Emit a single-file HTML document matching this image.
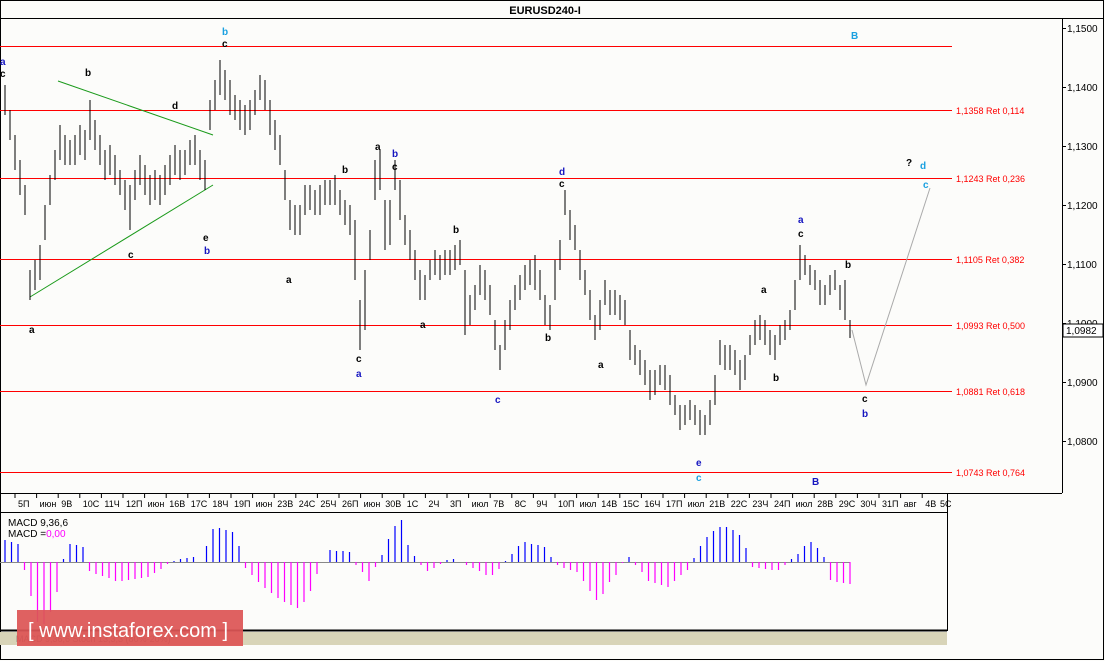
<!DOCTYPE html>
<html><head><meta charset="utf-8"><style>
body{margin:0;background:#fcfcfa;}
svg{display:block;font-family:"Liberation Sans",sans-serif;}
</style></head><body>
<svg width="1105" height="661" viewBox="0 0 1105 661" xmlns="http://www.w3.org/2000/svg">
<rect x="0.5" y="0.5" width="1103" height="659" fill="#fcfcfa" stroke="#000"/>
<text x="545" y="14" font-size="11" font-weight="bold" text-anchor="middle">EURUSD240-I</text>
<line x1="0" y1="18.5" x2="1104" y2="18.5" stroke="#000"/>
<line x1="1062.5" y1="18" x2="1062.5" y2="493" stroke="#000"/>
<line x1="0" y1="493.5" x2="1062" y2="493.5" stroke="#000"/>
<g stroke="#f00" stroke-width="1">
<line x1="0" y1="46.5" x2="952" y2="46.5"/>
<line x1="0" y1="110.5" x2="952" y2="110.5"/>
<line x1="0" y1="178.5" x2="952" y2="178.5"/>
<line x1="0" y1="259.5" x2="952" y2="259.5"/>
<line x1="0" y1="325.5" x2="952" y2="325.5"/>
<line x1="0" y1="391.5" x2="952" y2="391.5"/>
<line x1="0" y1="472.5" x2="952" y2="472.5"/>
</g>
<g fill="#f00" font-size="9">
<text x="956" y="114">1,1358 Ret 0,114</text>
<text x="956" y="182">1,1243 Ret 0,236</text>
<text x="956" y="263">1,1105 Ret 0,382</text>
<text x="956" y="329">1,0993 Ret 0,500</text>
<text x="956" y="395">1,0881 Ret 0,618</text>
<text x="956" y="476">1,0743 Ret 0,764</text>
</g>
<g font-size="10" fill="#000">
<g stroke="#000"><line x1="1062" y1="28.5" x2="1066" y2="28.5"/><line x1="1062" y1="87.5" x2="1066" y2="87.5"/><line x1="1062" y1="146.5" x2="1066" y2="146.5"/><line x1="1062" y1="205.5" x2="1066" y2="205.5"/><line x1="1062" y1="264.5" x2="1066" y2="264.5"/><line x1="1062" y1="323.5" x2="1066" y2="323.5"/><line x1="1062" y1="382.5" x2="1066" y2="382.5"/><line x1="1062" y1="441.5" x2="1066" y2="441.5"/></g>
<text x="1067" y="32">1,1500</text><text x="1067" y="91">1,1400</text><text x="1067" y="150">1,1300</text><text x="1067" y="209">1,1200</text><text x="1067" y="268">1,1100</text><text x="1067" y="327">1,1000</text><text x="1067" y="386">1,0900</text><text x="1067" y="445">1,0800</text>
</g>
<rect x="1063" y="324" width="40" height="13" fill="#fff" stroke="#000"/>
<text x="1066" y="334" font-size="10">1,0982</text>
<g stroke="#1a9a1a"><line x1="58" y1="81" x2="213" y2="135"/><line x1="30" y1="297" x2="213" y2="185"/></g>
<polyline points="852,330 866,385 930,188" fill="none" stroke="#aaa"/>
<path stroke="#000" fill="none" d="M5 85V115M10 110V140M15 135V170M20 160V195M25 185V215M30 270V300M35 260V290M40 245V280M45 205V240M50 175V205M55 150V180M60 125V160M65 135V165M70 140V165M75 135V165M80 125V155M85 130V160M90 100V140M95 120V150M100 135V165M105 150V180M110 145V175M115 155V185M120 170V195M125 180V210M130 185V230M135 170V200M140 155V185M145 165V195M150 175V205M155 170V200M160 175V205M165 165V195M170 155V185M175 145V175M180 150V180M185 150V175M190 140V165M195 135V165M200 150V180M205 160V190M210 100V130M215 80V110M220 60V95M225 70V100M230 80V115M235 95V120M240 100V130M245 105V135M250 100V130M255 90V115M260 75V100M265 80V110M270 100V135M275 120V150M280 135V165M285 170V200M290 200V230M295 205V235M300 205V235M305 185V215M310 185V210M315 190V215M320 185V215M325 180V205M330 180V205M335 175V205M340 190V215M345 200V225M350 205V235M355 220V280M360 300V350M365 270V330M370 230V260M375 160V200M380 150V190M385 200V250M390 200V245M395 160V190M400 180V220M405 215V245M410 230V260M415 250V280M420 270V300M425 275V300M430 260V280M435 250V275M440 255V280M445 250V275M450 250V275M455 245V270M460 240V265M465 270V335M470 295V325M475 285V310M480 265V295M485 270V300M490 285V315M495 320V350M500 345V370M505 320V350M510 300V330M515 285V310M520 275V300M525 265V290M530 260V285M535 255V290M540 270V300M545 295V325M550 305V330M555 260V300M560 240V270M565 190V215M570 210V240M575 225V250M580 250V280M585 270V295M590 290V320M595 315V340M600 300V330M605 280V305M610 290V315M615 290V315M620 295V320M625 300V325M630 330V360M635 345V365M640 350V375M645 360V385M650 370V400M655 370V395M660 365V385M665 365V390M670 375V405M675 395V415M680 405V430M685 405V425M690 400V420M695 405V425M700 410V435M705 415V435M710 400V425M715 375V405M720 340V365M725 345V370M730 345V370M735 350V375M740 360V390M745 355V380M750 335V355M755 320V345M760 315V340M765 320V345M770 330V355M775 335V360M780 325V345M785 320V340M790 310V330M795 280V310M800 245V280M805 255V275M810 265V285M815 270V290M820 280V305M825 285V305M830 275V295M835 270V290M840 285V310M845 280V320M850 320V338"/>
<g font-size="9" fill="#000">
<text x="18" y="507">5П</text><text x="39.6" y="507">июн</text><text x="61.2" y="507">9В</text><text x="82.8" y="507">10С</text><text x="104.4" y="507">11Ч</text><text x="126" y="507">12П</text><text x="147.6" y="507">июн</text><text x="169.2" y="507">16В</text><text x="190.8" y="507">17С</text><text x="212.4" y="507">18Ч</text><text x="234" y="507">19П</text><text x="255.6" y="507">июн</text><text x="277.2" y="507">23В</text><text x="298.8" y="507">24С</text><text x="320.4" y="507">25Ч</text><text x="342" y="507">26П</text><text x="363.6" y="507">июн</text><text x="385.2" y="507">30В</text><text x="406.8" y="507">1С</text><text x="428.4" y="507">2Ч</text><text x="450" y="507">3П</text><text x="471.6" y="507">июл</text><text x="493.2" y="507">7В</text><text x="514.8" y="507">8С</text><text x="536.4" y="507">9Ч</text><text x="558" y="507">10П</text><text x="579.6" y="507">июл</text><text x="601.2" y="507">14В</text><text x="622.8" y="507">15С</text><text x="644.4" y="507">16Ч</text><text x="666" y="507">17П</text><text x="687.6" y="507">июл</text><text x="709.2" y="507">21В</text><text x="730.8" y="507">22С</text><text x="752.4" y="507">23Ч</text><text x="774" y="507">24П</text><text x="795.6" y="507">июл</text><text x="817.2" y="507">28В</text><text x="838.8" y="507">29С</text><text x="860.4" y="507">30Ч</text><text x="882" y="507">31П</text><text x="903.6" y="507">авг</text><text x="925.2" y="507">4В</text><text x="940" y="507">5С</text>
</g>
<path stroke="#000" d="M15 493V498M36.6 493V498M58.2 493V498M79.8 493V498M101.4 493V498M123 493V498M144.6 493V498M166.2 493V498M187.8 493V498M209.4 493V498M231 493V498M252.6 493V498M274.2 493V498M295.8 493V498M317.4 493V498M339 493V498M360.6 493V498M382.2 493V498M403.8 493V498M425.4 493V498M447 493V498M468.6 493V498M490.2 493V498M511.8 493V498M533.4 493V498M555 493V498M576.6 493V498M598.2 493V498M619.8 493V498M641.4 493V498M663 493V498M684.6 493V498M706.2 493V498M727.8 493V498M749.4 493V498M771 493V498M792.6 493V498M814.2 493V498M835.8 493V498M857.4 493V498M879 493V498M900.6 493V498M922.2 493V498"/>
<line x1="0" y1="512.5" x2="947" y2="512.5" stroke="#000"/>
<line x1="947.5" y1="493" x2="947.5" y2="631" stroke="#000"/>
<line x1="0" y1="562.5" x2="850" y2="562.5" stroke="#888"/>
<path stroke="#0000ff" stroke-width="1.2" d="M5 562V540M11.5 562V542M18 562V544M63.5 562V559M70 562V544M76.5 562V545M83 562V547M174 562V561M180.5 562V559M187 562V558M193.5 562V557M206.5 562V546M213 562V529M219.5 562V528M226 562V530M232.5 562V532M239 562V546M330 562V550M336.5 562V551M343 562V551M349.5 562V552M382 562V555M388.5 562V539M395 562V526M401.5 562V520M408 562V545M414.5 562V556M447 562V560M453.5 562V559M505.5 562V561M512 562V554M518.5 562V546M525 562V542M531.5 562V544M538 562V545M544.5 562V547M551 562V557M629 562V557M694 562V558M700.5 562V546M707 562V537M713.5 562V531M720 562V527M726.5 562V527M733 562V530M739.5 562V535M746 562V548M791.5 562V559M798 562V554M804.5 562V546M811 562V542M817.5 562V548M824 562V557"/>
<path stroke="#ff00ff" stroke-width="1.2" d="M24.5 562V570M31 562V596M37.5 562V622M44 562V624M50.5 562V612M57 562V592M89.5 562V571M96 562V574M102.5 562V576M109 562V578M115.5 562V581M122 562V581M128.5 562V580M135 562V579M141.5 562V578M148 562V577M154.5 562V573M161 562V569M167.5 562V564M245.5 562V568M252 562V575M258.5 562V582M265 562V588M271.5 562V593M278 562V598M284.5 562V602M291 562V605M297.5 562V608M304 562V602M310.5 562V591M317 562V574M356 562V565M362.5 562V572M369 562V581M375.5 562V567M421 562V565M427.5 562V571M434 562V568M440.5 562V564M466.5 562V565M473 562V568M479.5 562V571M486 562V575M492.5 562V575M499 562V569M557.5 562V565M564 562V568M570.5 562V570M577 562V572M583.5 562V581M590 562V591M596.5 562V600M603 562V594M609.5 562V582M616 562V575M622.5 562V563M635.5 562V565M642 562V572M648.5 562V581M655 562V583M661.5 562V585M668 562V587M674.5 562V581M681 562V575M687.5 562V570M752.5 562V567M759 562V568M765.5 562V569M772 562V570M778.5 562V570M785 562V565M830.5 562V580M837 562V582M843.5 562V583M850 562V584"/>
<text x="8" y="526" font-size="10">MACD 9,36,6</text>
<text x="8" y="537" font-size="10">MACD =<tspan fill="#f0f">0,00</tspan></text>
<line x1="0" y1="630.5" x2="947" y2="630.5" stroke="#000" stroke-width="2"/>
<rect x="0" y="632" width="947" height="13" fill="#d8d4b8"/>
<text x="16" y="642" font-size="9" fill="#555">MACD 9,36,6   Stoch 13,3,3 (80%-20%)</text>
<rect x="17" y="610" width="226" height="36" fill="#dd5555" opacity="0.93"/>
<text x="28" y="637" font-size="20" fill="#fff">[ www.instaforex.com ]</text>
<g font-size="10" font-weight="bold">
<text x="851" y="39" fill="#1aa0e0">B</text>
<text x="222" y="35" fill="#1aa0e0">b</text>
<text x="222" y="47" fill="#000">c</text>
<text x="906" y="166" fill="#000">?</text>
<text x="920" y="169" fill="#1aa0e0">d</text>
<text x="923" y="188" fill="#1aa0e0">c</text>
<text x="798" y="223" fill="#1515c0">a</text>
<text x="798" y="237" fill="#000">c</text>
<text x="845" y="268" fill="#000">b</text>
<text x="862" y="402" fill="#000">c</text>
<text x="862" y="417" fill="#1515c0">b</text>
<text x="812" y="485" fill="#1515c0">B</text>
<text x="0" y="65" fill="#1515c0">a</text><text x="0" y="77" fill="#000">c</text>
<text x="85" y="76" fill="#000">b</text><text x="172" y="109" fill="#000">d</text>
<text x="204" y="254" fill="#1515c0">b</text><text x="203" y="241" fill="#000">e</text>
<text x="128" y="258" fill="#000">c</text><text x="29" y="333" fill="#000">a</text>
<text x="286" y="283" fill="#000">a</text><text x="375" y="150" fill="#000">a</text>
<text x="392" y="157" fill="#1515c0">b</text><text x="392" y="170" fill="#000">c</text>
<text x="342" y="173" fill="#000">b</text><text x="356" y="362" fill="#000">c</text>
<text x="356" y="377" fill="#1515c0">a</text><text x="495" y="403" fill="#1515c0">c</text>
<text x="559" y="175" fill="#1515c0">d</text><text x="559" y="187" fill="#000">c</text>
<text x="696" y="466" fill="#1515c0">e</text><text x="696" y="481" fill="#1aa0e0">c</text>
<text x="773" y="381" fill="#000">b</text><text x="761" y="293" fill="#000">a</text>
<text x="598" y="368" fill="#000">a</text><text x="545" y="341" fill="#000">b</text>
<text x="420" y="328" fill="#000">a</text><text x="453" y="233" fill="#000">b</text>
</g>
</svg>
</body></html>
